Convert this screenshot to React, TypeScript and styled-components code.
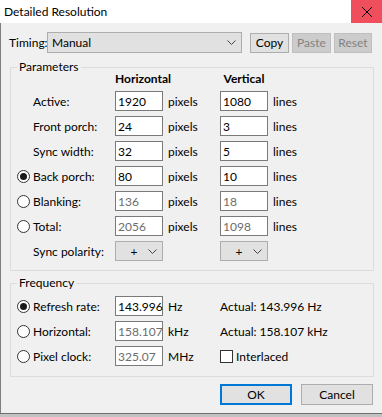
import React from "react";
import styled, { createGlobalStyle } from "styled-components";

const FONT = `"Lato", "Noto Sans", sans-serif`;

const Global = createGlobalStyle`
  html, body { margin: 0; padding: 0; background: #c2c2c2; }
  * { box-sizing: border-box; }
  body { font-family: ${FONT}; font-size: 12px; color: #000; }
`;

const Window = styled.div`
  width: 382px;
  height: 414px;
  background: #f0f0f0;
  display: flex;
  flex-direction: column;
  border-bottom: 1px solid #6f6f6f;
`;

const TitleBar = styled.div`
  height: 23px;
  background: #fff;
  display: flex;
  align-items: center;
  justify-content: space-between;
  padding-left: 4px;
  flex: none;
`;

const Title = styled.span`
  font-size: 12px;
  color: #000;
`;

const CloseButton = styled.div`
  width: 31px;
  height: 23px;
  background: #ef4f5c;
  display: flex;
  align-items: center;
  justify-content: center;
`;

const Body = styled.div`
  flex: 1;
  border-left: 1px solid #7e7e7e;
  padding: 9px 0 0 8px;
  display: flex;
  flex-direction: column;
`;

const TimingRow = styled.div`
  display: flex;
  align-items: center;
  height: 21px;
`;

const TimingLabel = styled.span`
  width: 38px;
`;

const Combo = styled.div<{ $w: number; $h: number }>`
  width: ${(p) => p.$w}px;
  height: ${(p) => p.$h}px;
  background: #e1e1e1;
  border: 1px solid #adadad;
  display: flex;
  align-items: center;
  justify-content: space-between;
  padding: 0 5px 0 4px;
`;

const ComboText = styled.span<{ $center?: boolean }>`
  flex: 1;
  text-align: ${(p) => (p.$center ? "center" : "left")};
`;

const Button = styled.div<{ $disabled?: boolean; $default?: boolean; $w: number; $h: number }>`
  width: ${(p) => p.$w}px;
  height: ${(p) => p.$h}px;
  display: flex;
  align-items: center;
  justify-content: center;
  background: ${(p) => (p.$disabled ? "#cccccc" : "#e1e1e1")};
  border: ${(p) =>
    p.$default ? "2px solid #0078d7" : p.$disabled ? "1px solid #bfbfbf" : "1px solid #adadad"};
  color: ${(p) => (p.$disabled ? "#838383" : "#000")};
`;

const Toolbar = styled.div`
  display: flex;
  gap: 3px;
  margin-left: 8px;
`;

const Column = styled.div`
  width: 364px;
  margin-left: 1px;
  display: flex;
  flex-direction: column;
`;

const Group = styled.div<{ $mt: number; $pt: number; $pb: number }>`
  position: relative;
  border: 1px solid #dcdcdc;
  margin-top: ${(p) => p.$mt}px;
  padding: ${(p) => p.$pt}px 0 ${(p) => p.$pb}px 6px;
`;

const Legend = styled.span`
  position: absolute;
  top: -9px;
  left: 6px;
  padding: 0 2px;
  background: #f0f0f0;
  line-height: 16px;
`;

const Grid = styled.div<{ $header?: boolean }>`
  display: grid;
  grid-template-columns: 16px 82px 48px 57px 48px 1fr;
  grid-template-rows: ${(p) => (p.$header ? "14px" : "")};
  grid-auto-rows: 20px;
  row-gap: 5px;
  align-items: center;
`;

const Header = styled.span<{ $col: number }>`
  grid-column: ${(p) => p.$col};
  font-weight: 700;
  text-align: center;
  white-space: nowrap;
  line-height: 14px;
`;

const Label = styled.span`
  grid-column: 2;
  white-space: nowrap;
`;

const RadioCell = styled.span`
  grid-column: 1;
  display: flex;
  align-items: center;
`;

const RadioCircle = styled.span<{ $checked?: boolean }>`
  width: 13px;
  height: 13px;
  border-radius: 50%;
  border: 1px solid #333;
  background: #fff;
  display: flex;
  align-items: center;
  justify-content: center;
  &::after {
    content: "";
    width: 7px;
    height: 7px;
    border-radius: 50%;
    background: ${(p) => (p.$checked ? "#1a1a1a" : "transparent")};
  }
`;

const Field = styled.span<{ $col: number; $disabled?: boolean }>`
  grid-column: ${(p) => p.$col};
  height: 20px;
  border: 1px solid #7a7a7a;
  background: #fff;
  padding-left: 2px;
  display: flex;
  align-items: center;
  color: ${(p) => (p.$disabled ? "#6d6d6d" : "#000")};
`;

const Unit = styled.span<{ $col: number }>`
  grid-column: ${(p) => p.$col};
  padding-left: 5px;
  white-space: nowrap;
`;

const Cell = styled.span<{ $col: number; $span?: number }>`
  grid-column: ${(p) => p.$col} / span ${(p) => p.$span ?? 1};
  white-space: nowrap;
  display: flex;
  align-items: center;
  gap: 3px;
`;

const Checkbox = styled.span`
  width: 13px;
  height: 13px;
  border: 1px solid #333;
  background: #fff;
`;

const ComboSlot = styled.span<{ $col: number }>`
  grid-column: ${(p) => p.$col};
`;

const ButtonRow = styled.div`
  display: flex;
  justify-content: flex-end;
  gap: 9px;
  margin-top: 7px;
  padding-right: 1px;
`;

const Chevron = () => (
  <svg width="9" height="5" viewBox="0 0 9 5">
    <path d="M0.5 0.5 L4.5 4.5 L8.5 0.5" fill="none" stroke="#444" strokeWidth="1" />
  </svg>
);

const CloseIcon = () => (
  <svg width="10" height="10" viewBox="0 0 10 10">
    <path d="M0 0 L10 10 M10 0 L0 10" stroke="#000" strokeWidth="1" />
  </svg>
);

type Row = {
  label: string;
  radio?: boolean;
  checked?: boolean;
  h: string;
  v: string;
  disabled?: boolean;
};

const rows: Row[] = [
  { label: "Active:", h: "1920", v: "1080" },
  { label: "Front porch:", h: "24", v: "3" },
  { label: "Sync width:", h: "32", v: "5" },
  { label: "Back porch:", radio: true, checked: true, h: "80", v: "10" },
  { label: "Blanking:", radio: true, h: "136", v: "18", disabled: true },
  { label: "Total:", radio: true, h: "2056", v: "1098", disabled: true },
];

export default function App() {
  return (
    <>
      <Global />
      <Window>
        <TitleBar>
          <Title>Detailed Resolution</Title>
          <CloseButton>
            <CloseIcon />
          </CloseButton>
        </TitleBar>
        <Body>
          <TimingRow>
            <TimingLabel>Timing:</TimingLabel>
            <Combo $w={195} $h={21}>
              <ComboText>Manual</ComboText>
              <Chevron />
            </Combo>
            <Toolbar>
              <Button $w={39} $h={20}>Copy</Button>
              <Button $w={39} $h={20} $disabled>Paste</Button>
              <Button $w={38} $h={20} $disabled>Reset</Button>
            </Toolbar>
          </TimingRow>
          <Column>
            <Group $mt={14} $pt={4} $pb={9}>
              <Legend>Parameters</Legend>
              <Grid $header>
                <Header $col={3}>Horizontal</Header>
                <Header $col={5}>Vertical</Header>
                {rows.map((r) => (
                  <React.Fragment key={r.label}>
                    {r.radio && (
                      <RadioCell>
                        <RadioCircle $checked={r.checked} />
                      </RadioCell>
                    )}
                    <Label>{r.label}</Label>
                    <Field $col={3} $disabled={r.disabled}>{r.h}</Field>
                    <Unit $col={4}>pixels</Unit>
                    <Field $col={5} $disabled={r.disabled}>{r.v}</Field>
                    <Unit $col={6}>lines</Unit>
                  </React.Fragment>
                ))}
                <Label>Sync polarity:</Label>
                <ComboSlot $col={3}>
                  <Combo $w={48} $h={20}>
                    <ComboText $center>+</ComboText>
                    <Chevron />
                  </Combo>
                </ComboSlot>
                <ComboSlot $col={5}>
                  <Combo $w={48} $h={20}>
                    <ComboText $center>+</ComboText>
                    <Chevron />
                  </Combo>
                </ComboSlot>
              </Grid>
            </Group>
            <Group $mt={12} $pt={12} $pb={10}>
              <Legend>Frequency</Legend>
              <Grid>
                <RadioCell>
                  <RadioCircle $checked />
                </RadioCell>
                <Label>Refresh rate:</Label>
                <Field $col={3}>143.996</Field>
                <Unit $col={4}>Hz</Unit>
                <Cell $col={5} $span={2}>Actual: 143.996 Hz</Cell>

                <RadioCell>
                  <RadioCircle />
                </RadioCell>
                <Label>Horizontal:</Label>
                <Field $col={3} $disabled>158.107</Field>
                <Unit $col={4}>kHz</Unit>
                <Cell $col={5} $span={2}>Actual: 158.107 kHz</Cell>

                <RadioCell>
                  <RadioCircle />
                </RadioCell>
                <Label>Pixel clock:</Label>
                <Field $col={3} $disabled>325.07</Field>
                <Unit $col={4}>MHz</Unit>
                <Cell $col={5} $span={2}>
                  <Checkbox />
                  Interlaced
                </Cell>
              </Grid>
            </Group>
            <ButtonRow>
              <Button $w={72} $h={21} $default>OK</Button>
              <Button $w={72} $h={21}>Cancel</Button>
            </ButtonRow>
          </Column>
        </Body>
      </Window>
    </>
  );
}
